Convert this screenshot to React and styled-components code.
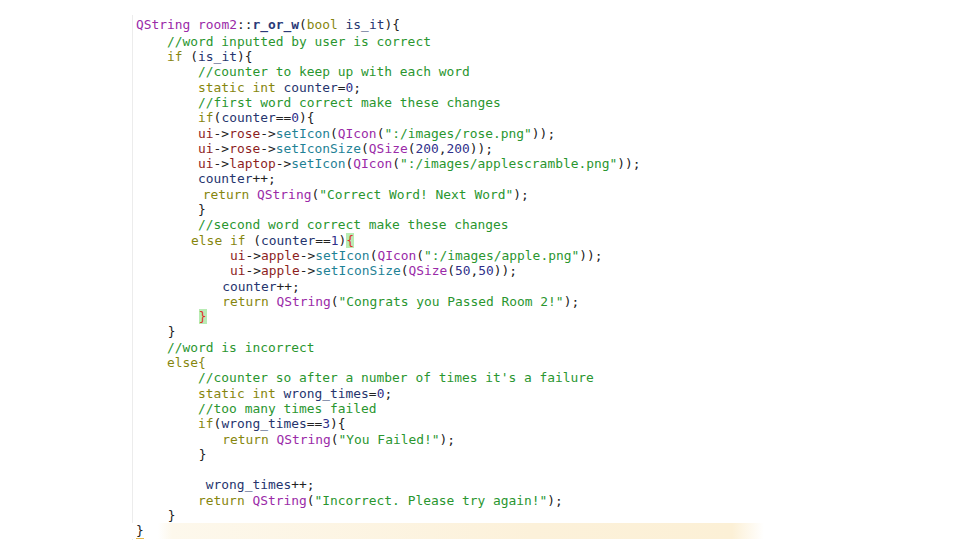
import React from 'react';
import styled, { createGlobalStyle } from 'styled-components';

const GlobalStyle = createGlobalStyle`
  html, body {
    margin: 0;
    padding: 0;
    background: #ffffff;
  }
`;

const Page = styled.div`
  width: 960px;
  height: 540px;
  overflow: hidden;
  background: #fff;
  padding: 15px 0 0 132px;
  box-sizing: border-box;
`;

const Editor = styled.div`
  border-left: 1px solid #ececec;
  height: 100%;
  padding: 2.4px 0 0 3px;
  box-sizing: border-box;
  font-family: 'DejaVu Sans Mono', 'Liberation Mono', monospace;
  font-size: 12.9px;
  color: #1b1b1b;
`;

const Line = styled.div`
  height: 15.3px;
  line-height: 15.3px;
  white-space: pre;
  padding-left: ${(p) => p.$indent * 7.76}px;
  &:first-child {
    margin-bottom: 1.1px;
  }
  ${(p) =>
    p.$current &&
    `
    margin-left: -4px;
    padding-left: 4px;
    background: linear-gradient(90deg, #fff 0px, #fff 26px, #fdf8ec 40px, #fcf1da 400px, #fcf0d6 600px, #fff 632px);
  `}
`;

const colors = {
  kw: '#86860e',
  type: '#9a2aa8',
  decl: '#2b3a78',
  loc: '#26356e',
  cm: '#2a962f',
  str: '#2a962f',
  num: '#30308a',
  fn: '#1f8296',
  field: '#8d1e1e',
  p: '#222',
};

const Tok = styled.span`
  color: ${(p) => colors[p.$k] || '#222'};
  ${(p) => p.$k === 'decl' && 'font-weight: bold;'}
`;

const Match = styled.span`
  color: #e0302a;
  background: #b8ecb4;
`;

const LastBrace = styled.span`
  color: #222;
  border-bottom: 1px solid #e6b84a;
`;

const ui = (obj, fn) => [
  ['field', 'ui'],
  ['p', '->'],
  ['field', obj],
  ['p', '->'],
  ['fn', fn],
  ['p', '('],
];

const lines = [
  [0, [['type', 'QString'], ['p', ' '], ['type', 'room2'], ['p', '::'], ['decl', 'r_or_w'], ['p', '('], ['kw', 'bool'], ['p', ' '], ['loc', 'is_it'], ['p', '){']]],
  [4, [['cm', '//word inputted by user is correct']]],
  [4, [['kw', 'if'], ['p', ' ('], ['loc', 'is_it'], ['p', '){']]],
  [8, [['cm', '//counter to keep up with each word']]],
  [8, [['kw', 'static'], ['p', ' '], ['kw', 'int'], ['p', ' '], ['loc', 'counter'], ['p', '='], ['num', '0'], ['p', ';']]],
  [8, [['cm', '//first word correct make these changes']]],
  [8, [['kw', 'if'], ['p', '('], ['loc', 'counter'], ['p', '=='], ['num', '0'], ['p', '){']]],
  [8, [...ui('rose', 'setIcon'), ['type', 'QIcon'], ['p', '('], ['str', '":/images/rose.png"'], ['p', '));']]],
  [8, [...ui('rose', 'setIconSize'), ['type', 'QSize'], ['p', '('], ['num', '200'], ['p', ','], ['num', '200'], ['p', '));']]],
  [8, [...ui('laptop', 'setIcon'), ['type', 'QIcon'], ['p', '('], ['str', '":/images/applescramble.png"'], ['p', '));']]],
  [8, [['loc', 'counter'], ['p', '++;']]],
  [8.6, [['kw', 'return'], ['p', ' '], ['type', 'QString'], ['p', '('], ['str', '"Correct Word! Next Word"'], ['p', ');']]],
  [8, [['p', '}']]],
  [8, [['cm', '//second word correct make these changes']]],
  [7.1, [['kw', 'else'], ['p', ' '], ['kw', 'if'], ['p', ' ('], ['loc', 'counter'], ['p', '=='], ['num', '1'], ['p', ')'], ['match', '{']]],
  [12.1, [...ui('apple', 'setIcon'), ['type', 'QIcon'], ['p', '('], ['str', '":/images/apple.png"'], ['p', '));']]],
  [12.1, [...ui('apple', 'setIconSize'), ['type', 'QSize'], ['p', '('], ['num', '50'], ['p', ','], ['num', '50'], ['p', '));']]],
  [11.1, [['loc', 'counter'], ['p', '++;']]],
  [11.1, [['kw', 'return'], ['p', ' '], ['type', 'QString'], ['p', '('], ['str', '"Congrats you Passed Room 2!"'], ['p', ');']]],
  [8.1, [['match', '}']]],
  [4.1, [['p', '}']]],
  [4, [['cm', '//word is incorrect']]],
  [4, [['kw', 'else'], ['kw', '{']]],
  [8, [['cm', "//counter so after a number of times it's a failure"]]],
  [8, [['kw', 'static'], ['p', ' '], ['kw', 'int'], ['p', ' '], ['loc', 'wrong_times'], ['p', '='], ['num', '0'], ['p', ';']]],
  [8, [['cm', '//too many times failed']]],
  [8, [['kw', 'if'], ['p', '('], ['loc', 'wrong_times'], ['p', '=='], ['num', '3'], ['p', '){']]],
  [11.1, [['kw', 'return'], ['p', ' '], ['type', 'QString'], ['p', '('], ['str', '"You Failed!"'], ['p', ');']]],
  [8.1, [['p', '}']]],
  [0, []],
  [9, [['loc', 'wrong_times'], ['p', '++;']]],
  [8, [['kw', 'return'], ['p', ' '], ['type', 'QString'], ['p', '('], ['str', '"Incorrect. Please try again!"'], ['p', ');']]],
  [4.1, [['p', '}']]],
  [0, [['last', '}']]],
];

export default function App() {
  return (
    <>
      <GlobalStyle />
      <Page>
        <Editor>
          {lines.map(([indent, toks], i) => (
            <Line key={i} $indent={indent} $current={i === lines.length - 1}>
              {toks.length === 0 && ' '}
              {toks.map(([k, t], j) =>
                k === 'match' ? (
                  <Match key={j}>{t}</Match>
                ) : k === 'last' ? (
                  <LastBrace key={j}>{t}</LastBrace>
                ) : (
                  <Tok key={j} $k={k}>
                    {t}
                  </Tok>
                )
              )}
            </Line>
          ))}
        </Editor>
      </Page>
    </>
  );
}
